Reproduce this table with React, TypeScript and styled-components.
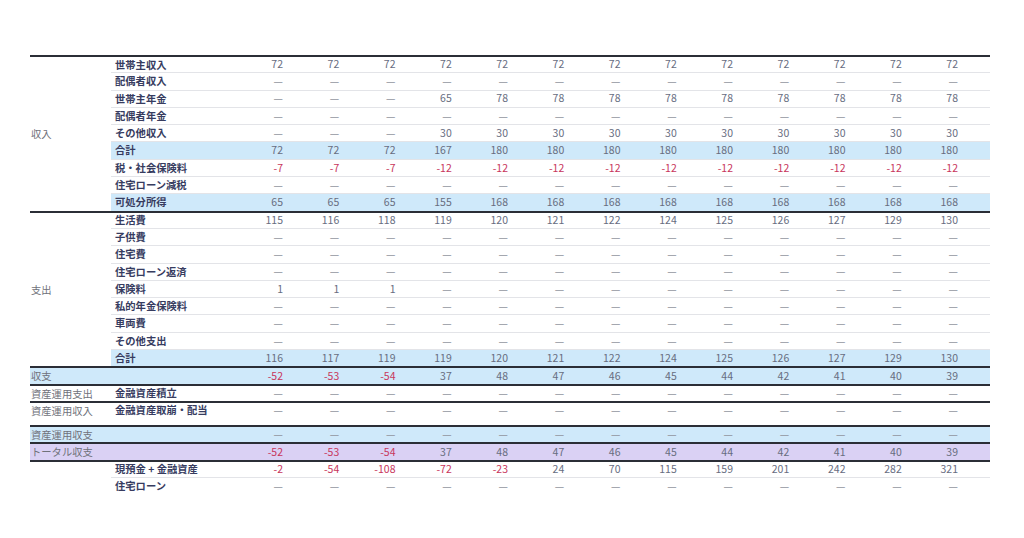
import React from "react";
import styled, { createGlobalStyle, css } from "styled-components";

const GlobalStyle = createGlobalStyle`
  html, body { margin: 0; padding: 0; background: #ffffff; }
  body { font-family: "Noto Sans CJK JP", "Noto Sans", sans-serif; }
`;

type Tone = "none" | "blue" | "purple";
const toneBg: Record<Tone, string> = {
  none: "transparent",
  blue: "#cfe9fa",
  purple: "#dad1f4",
};

const ROW_H = 17.3;

const Page = styled.div`
  width: 1024px;
  height: 538px;
  box-sizing: border-box;
  padding: 55px 34px 0 30px;
`;

const Table = styled.div`
  width: 960px;
  display: flex;
  flex-direction: column;
`;

const Section = styled.div<{ $tone?: Tone; $gap?: boolean; $noBorder?: boolean }>`
  display: flex;
  border-top: ${(p) => (p.$noBorder ? "none" : "2px solid #2b2e36")};
  background: ${(p) => toneBg[p.$tone ?? "none"]};
  ${(p) =>
    p.$gap &&
    css`
      margin-top: 6.7px;
    `}
`;

const SectionLabel = styled.div`
  width: 81px;
  flex: none;
  display: flex;
  align-items: center;
  padding-left: 1px;
  box-sizing: border-box;
  font-size: 10.3px;
  color: #6f717a;
  white-space: nowrap;
`;

const Rows = styled.div`
  flex: 1;
  display: flex;
  flex-direction: column;
`;

const Row = styled.div<{ $tone?: Tone }>`
  display: grid;
  grid-template-columns: 127.75px repeat(13, 56.25px) 1fr;
  align-items: center;
  height: ${ROW_H}px;
  box-sizing: border-box;
  background: ${(p) => toneBg[p.$tone ?? "none"]};
  &:first-child {
    height: ${ROW_H - 2}px;
  }
  & + & {
    border-top: 1px solid #e3e4e8;
  }
`;

const Item = styled.div`
  padding-left: 4px;
  font-size: 10.3px;
  font-weight: 700;
  color: #373c5f;
  white-space: nowrap;
  line-height: 1;
`;

const Value = styled.div<{ $kind: "pos" | "neg" | "dash" }>`
  text-align: right;
  padding-right: 12px;
  font-size: 10.5px;
  line-height: 1;
  white-space: nowrap;
  color: ${(p) =>
    p.$kind === "neg" ? "#c8365c" : p.$kind === "dash" ? "#8f939d" : "#676d7f"};
`;

type Cell = number | null;

const D: Cell[] = Array(13).fill(null);
const rep = (v: Cell, n: number): Cell[] => Array(n).fill(v);

type RowDef = { item: string; values: Cell[]; tone?: Tone };

const incomeRows: RowDef[] = [
  { item: "世帯主収入", values: rep(72, 13) },
  { item: "配偶者収入", values: D },
  { item: "世帯主年金", values: [...rep(null, 3), 65, ...rep(78, 9)] },
  { item: "配偶者年金", values: D },
  { item: "その他収入", values: [...rep(null, 3), ...rep(30, 10)] },
  { item: "合計", values: [72, 72, 72, 167, ...rep(180, 9)], tone: "blue" },
  { item: "税・社会保険料", values: [-7, -7, -7, ...rep(-12, 10)] },
  { item: "住宅ローン減税", values: D },
  { item: "可処分所得", values: [65, 65, 65, 155, ...rep(168, 9)], tone: "blue" },
];

const expenseRows: RowDef[] = [
  { item: "生活費", values: [115, 116, 118, 119, 120, 121, 122, 124, 125, 126, 127, 129, 130] },
  { item: "子供費", values: D },
  { item: "住宅費", values: D },
  { item: "住宅ローン返済", values: D },
  { item: "保険料", values: [1, 1, 1, ...rep(null, 10)] },
  { item: "私的年金保険料", values: D },
  { item: "車両費", values: D },
  { item: "その他支出", values: D },
  {
    item: "合計",
    values: [116, 117, 119, 119, 120, 121, 122, 124, 125, 126, 127, 129, 130],
    tone: "blue",
  },
];

const balance: Cell[] = [-52, -53, -54, 37, 48, 47, 46, 45, 44, 42, 41, 40, 39];

const assetRows: RowDef[] = [
  {
    item: "現預金 + 金融資産",
    values: [-2, -54, -108, -72, -23, 24, 70, 115, 159, 201, 242, 282, 321],
  },
  { item: "住宅ローン", values: D },
];

const ValueCell = ({ v }: { v: Cell }) => {
  if (v === null) return <Value $kind="dash">—</Value>;
  return <Value $kind={v < 0 ? "neg" : "pos"}>{v}</Value>;
};

const DataRow = ({ row }: { row: RowDef }) => (
  <Row $tone={row.tone}>
    <Item>{row.item}</Item>
    {row.values.map((v, i) => (
      <ValueCell key={i} v={v} />
    ))}
    <div />
  </Row>
);

const Block = ({
  label,
  rows,
  tone,
  gap,
}: {
  label: string;
  rows: RowDef[];
  tone?: Tone;
  gap?: boolean;
}) => (
  <Section $tone={tone} $gap={gap}>
    <SectionLabel>{label}</SectionLabel>
    <Rows>
      {rows.map((r, i) => (
        <DataRow key={i} row={r} />
      ))}
    </Rows>
  </Section>
);

export default function App() {
  return (
    <>
      <GlobalStyle />
      <Page>
        <Table>
          <Block label="収入" rows={incomeRows} />
          <Block label="支出" rows={expenseRows} />
          <Block label="収支" tone="blue" rows={[{ item: "", values: balance }]} />
          <Block label="資産運用支出" rows={[{ item: "金融資産積立", values: D }]} />
          <Block label="資産運用収入" rows={[{ item: "金融資産取崩・配当", values: D }]} />
          <Block label="資産運用収支" tone="blue" gap rows={[{ item: "", values: D }]} />
          <Block label="トータル収支" tone="purple" rows={[{ item: "", values: balance }]} />
          <Block label="" rows={assetRows} />
        </Table>
      </Page>
    </>
  );
}
